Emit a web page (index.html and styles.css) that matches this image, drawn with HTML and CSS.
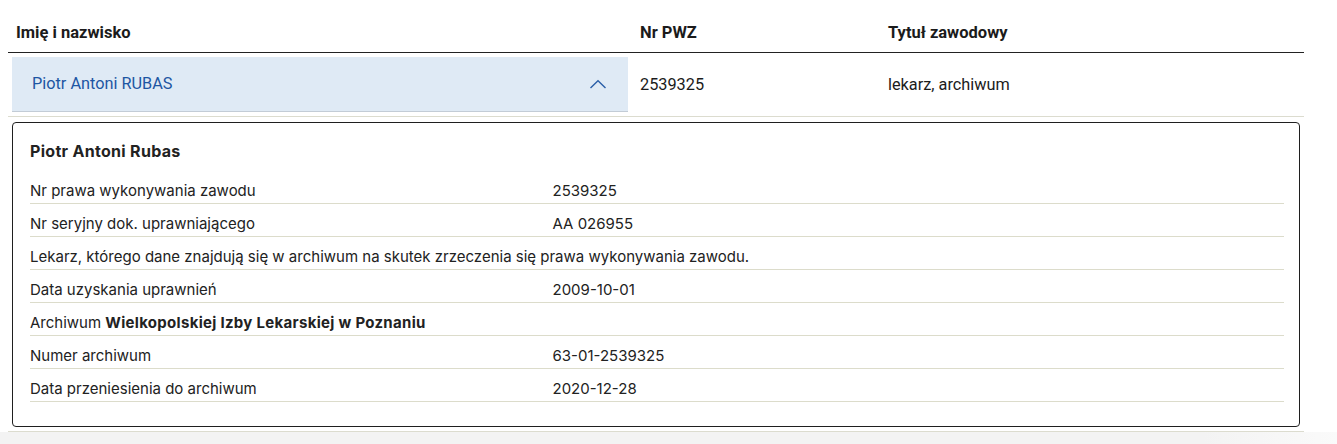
FILE: index.html
```html
<!DOCTYPE html>
<html lang="pl">
<head>
<meta charset="utf-8">
<title>Lekarz</title>
<link rel="stylesheet" href="styles.css">
</head>
<body>
<div class="page">
  <table class="results">
    <colgroup>
      <col class="c-name">
      <col class="c-pwz">
      <col class="c-title">
    </colgroup>
    <thead>
      <tr>
        <th>Imię i nazwisko</th>
        <th>Nr PWZ</th>
        <th>Tytuł zawodowy</th>
      </tr>
    </thead>
    <tbody>
      <tr class="main-row">
        <td class="name-cell">
          <div class="toggle">
            <span>Piotr Antoni RUBAS</span>
            <svg class="chev" width="18" height="10" viewBox="0 0 18 10"><polyline points="1.5,9 9,1.8 16.5,9" fill="none" stroke="#2b5fa8" stroke-width="1.4"/></svg>
          </div>
        </td>
        <td>2539325</td>
        <td>lekarz, archiwum</td>
      </tr>
      <tr class="detail-row">
        <td colspan="3">
          <div class="panel">
            <h3 class="panel-title">Piotr Antoni Rubas</h3>
            <div class="drow"><span>Nr prawa wykonywania zawodu</span><span>2539325</span></div>
            <div class="drow"><span>Nr seryjny dok. uprawniającego</span><span>AA 026955</span></div>
            <div class="drow full"><span>Lekarz, którego dane znajdują się w archiwum na skutek zrzeczenia się prawa wykonywania zawodu.</span></div>
            <div class="drow"><span>Data uzyskania uprawnień</span><span>2009-10-01</span></div>
            <div class="drow full"><span>Archiwum <b>Wielkopolskiej Izby Lekarskiej w Poznaniu</b></span></div>
            <div class="drow"><span>Numer archiwum</span><span>63-01-2539325</span></div>
            <div class="drow"><span>Data przeniesienia do archiwum</span><span>2020-12-28</span></div>
          </div>
        </td>
      </tr>
    </tbody>
  </table>
  <div class="footer-fade"></div>
</div>
</body>
</html>
```

FILE: styles.css
```css
* { box-sizing: border-box; }
html, body { margin: 0; padding: 0; background: #fff; }
body { font-family: Roboto, "Liberation Sans", sans-serif; color: #1b1b1b; }
.page { width: 1337px; height: 444px; overflow: hidden; }

.results {
  margin-left: 8px;
  width: 1296px;
  border-collapse: collapse;
  table-layout: fixed;
}
.c-name { width: 624px; }
.c-pwz { width: 248px; }
.c-title { width: 424px; }

.results th {
  text-align: left;
  font-weight: 700;
  font-size: 16.5px;
  line-height: 24px;
  padding: 21px 8px 7px;
  border-bottom: 1.5px solid #222;
  color: #1b1b1b;
}
.results td {
  font-size: 16.3px;
  line-height: 24px;
  padding: 0 8px;
  vertical-align: middle;
}
.main-row td { border-bottom: 1px solid #dcdccf; height: 64px; }
.main-row td.name-cell { padding: 4px; }
.toggle {
  display: flex;
  align-items: center;
  justify-content: space-between;
  height: 55px;
  padding: 0 21px 0 20px;
  background: #dfeaf5;
  border-bottom: 1px solid #c3ccd6;
  color: #1d56a3;
}
.chev { display: block; margin-top: -1px; }

.detail-row td { padding: 5px 4px 4px; border-bottom: 1px solid #dcdccf; }
.panel {
  border: 1px solid #1f1f1f;
  border-radius: 4px;
  padding: 16px 15px 24px 17px;
  width: 1288px;
  font-family: Inter, "Liberation Sans", Arial, sans-serif;
  font-size: 15px;
  color: #222;
}
.panel-title {
  margin: 0 0 8px;
  font-size: 16px;
  letter-spacing: 0.3px;
  line-height: 24px;
  font-weight: 700;
}
.drow {
  display: grid;
  grid-template-columns: 5fr 7fr;
  padding: 9px 0 2px;
  line-height: 21px;
  border-bottom: 1px solid #dcdccb;
}
.drow.full { grid-template-columns: 1fr; }
.drow b { font-weight: 700; letter-spacing: 0.3px; }

.footer-fade {
  height: 20px;
  background: linear-gradient(to right, #f3f3f3 0%, #f3f3f3 90%, #fafafa 100%);
}
```
